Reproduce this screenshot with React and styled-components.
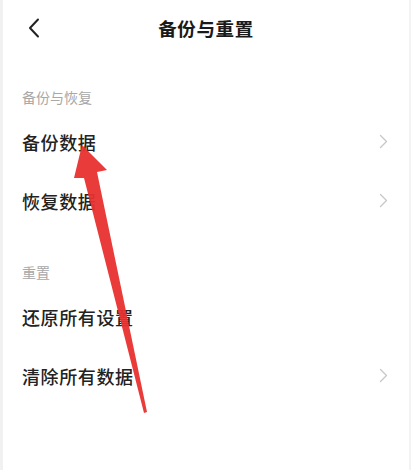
import styled, { createGlobalStyle } from 'styled-components';

const GlobalStyle = createGlobalStyle`
  html, body {
    margin: 0;
    padding: 0;
    background: #ffffff;
  }
  body {
    font-family: "Noto Sans CJK SC", "Noto Sans", sans-serif;
  }
`;

const Screen = styled.div`
  position: relative;
  width: 411px;
  height: 470px;
  box-sizing: border-box;
  border-left: 3px solid #f1f1f1;
  border-right: 2px solid #f3f3f3;
  background: #fff;
  overflow: hidden;
`;

const Header = styled.header`
  position: relative;
  height: 55px;
  display: flex;
  align-items: center;
  justify-content: center;
`;

const Back = styled.button`
  position: absolute;
  left: 20px;
  top: 16px;
  width: 22px;
  height: 24px;
  padding: 0;
  border: none;
  background: none;
  display: flex;
  align-items: center;
  justify-content: center;
`;

const Title = styled.h1`
  margin: 0;
  font-size: 18.5px;
  font-weight: 700;
  color: #1a1a1a;
  letter-spacing: 0.6px;
`;

const SectionTitle = styled.div`
  padding: 30px 19px 3px;
  line-height: 24px;
  font-size: 14px;
  color: #a8a8a8;
`;

const Row = styled.div`
  height: 59px;
  display: flex;
  align-items: center;
  justify-content: space-between;
  padding: 0 21px 0 19px;
`;

const Label = styled.span`
  font-size: 18px;
  font-weight: 500;
  color: #222;
  letter-spacing: 0.6px;
`;

const Arrow = styled.svg`
  position: absolute;
  left: 0;
  top: 0;
  pointer-events: none;
`;

const Chevron = () => (
  <svg width="9" height="15" viewBox="0 0 9 15">
    <path d="M1.5 1.5 L7.5 7.5 L1.5 13.5" fill="none" stroke="#c8c8c8" strokeWidth="1.4" strokeLinecap="round" strokeLinejoin="round" />
  </svg>
);

const sections = [
  {
    title: '备份与恢复',
    items: [
      { label: '备份数据', more: true },
      { label: '恢复数据', more: true },
    ],
  },
  {
    title: '重置',
    items: [
      { label: '还原所有设置', more: false },
      { label: '清除所有数据', more: true },
    ],
  },
];

export default function App() {
  return (
    <>
      <GlobalStyle />
      <Screen>
        <Header>
          <Back aria-label="返回">
            <svg width="12" height="20" viewBox="0 0 12 20">
              <path d="M10 1.5 L2 10 L10 18.5" fill="none" stroke="#222" strokeWidth="2" strokeLinecap="round" strokeLinejoin="round" />
            </svg>
          </Back>
          <Title>备份与重置</Title>
        </Header>
        {sections.map((s) => (
          <section key={s.title}>
            <SectionTitle>{s.title}</SectionTitle>
            {s.items.map((it) => (
              <Row key={it.label}>
                <Label>{it.label}</Label>
                {it.more && <Chevron />}
              </Row>
            ))}
          </section>
        ))}
        <Arrow width="411" height="470" viewBox="0 0 411 470">
          <path
            d="M79 145 L104 170 L94 172 L144 412 L141 413 L81 178 L71 178 Z"
            fill="#e8322f"
            opacity="0.95"
          />
        </Arrow>
      </Screen>
    </>
  );
}
